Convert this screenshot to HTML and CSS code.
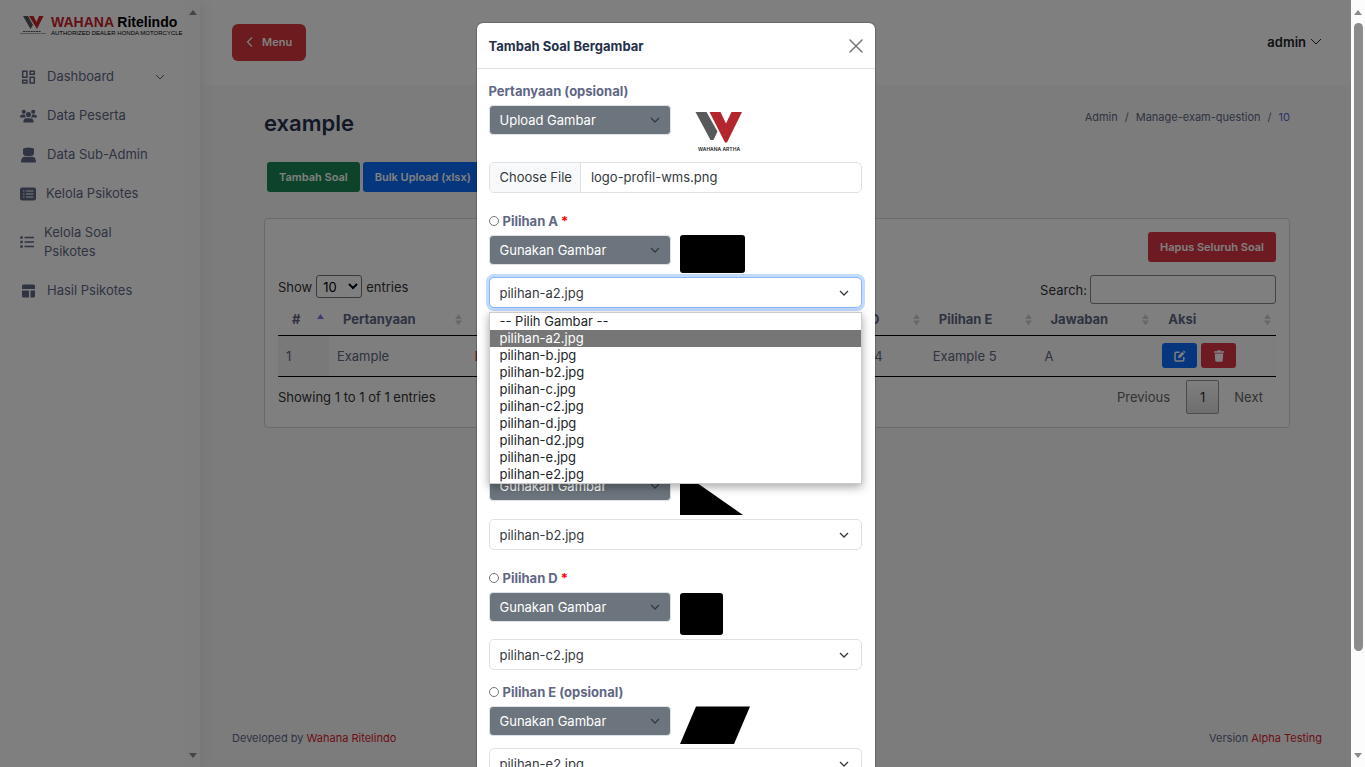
FILE: index.html
```html
<!DOCTYPE html>
<html lang="id">
<head>
<meta charset="utf-8">
<meta name="viewport" content="width=device-width, initial-scale=1">
<title>Manage exam question</title>
<link rel="stylesheet" href="styles.css">
</head>
<body>
<div class="window">
  <div class="app">
    <aside class="sidebar">
      <div class="sidebar-content">
        <a class="brand" href="#" aria-label="Wahana Ritelindo">
          <svg class="brand-mark" viewBox="0 0 26 22" width="26" height="22" aria-hidden="true">
            <path d="M3 2h5l5 9-2.500 4z" fill="#55575a"/>
            <path d="M9 2h4.500l3 6 2.500-6h4.500l-6.500 13z" fill="#c8202a"/>
            <path d="M3 17.500h18" stroke="#555" stroke-width="1" stroke-dasharray="2 .6"/>
            <path d="M0 19.500h26" stroke="#777" stroke-width=".8" stroke-dasharray="1.600 .5"/>
          </svg>
          <span class="brand-text">
            <span class="brand-name"><span class="brand-red">WAHANA</span> Ritelindo</span>
            <span class="brand-sub">AUTHORIZED DEALER HONDA MOTORCYCLE</span>
          </span>
        </a>
        <nav class="menu">
          <a class="menu-item" href="#">
            <svg class="icon" viewBox="0 0 16 16" width="17" height="16" fill="none" stroke="currentColor" stroke-width="1.500"><path d="M2.200 2.200h4.200v6H2.200zM9.600 2.200h4.200v3H9.600zM9.600 8.200h4.200v5.800H9.600zM2.200 11.200h4.200V14H2.200z"/></svg>
            <span class="menu-text">Dashboard</span>
            <svg class="chevron" viewBox="0 0 10 10" width="10" height="10" fill="none" stroke="currentColor"><path d="M1 3l4 4 4-4"/></svg>
          </a>
          <a class="menu-item" href="#">
            <svg class="icon" viewBox="0 0 18 16" width="17" height="16" fill="currentColor"><circle cx="4" cy="3.500" r="2.200"/><circle cx="14" cy="3.500" r="2.200"/><circle cx="9" cy="6.500" r="2.700"/><path d="M0 9.500Q0 6.500 3 6.500h2.300Q5.200 8.500 6.500 9.500zM18 9.500Q18 6.500 15 6.500h-2.300q.1 2-1.200 3zM3.500 15q0-4.700 3.500-4.700h4q3.500 0 3.500 4.700z"/></svg>
            <span class="menu-text">Data Peserta</span>
          </a>
          <a class="menu-item" href="#">
            <svg class="icon" viewBox="0 0 16 16" width="17" height="16" fill="currentColor"><path d="M2.500 3Q2.500.5 4.700 1 8 .2 11.300 1q2.200-.5 2.200 2v3q0 3-3.500 3H6Q2.500 9 2.500 6zM.5 15.500Q.5 10 4 9.700h8q3.500.3 3.500 5.800z"/></svg>
            <span class="menu-text">Data Sub-Admin</span>
          </a>
          <a class="menu-item" href="#">
            <svg class="icon" viewBox="0 0 16 14" width="16" height="14"><rect y=".5" width="16" height="13" rx="2" fill="currentColor"/><path d="M3 4h1.500M6 4h7.500M3 7h1.500M6 7h7.500M3 10h1.500M6 10h7.500" stroke="#fff" stroke-width="1.200"/></svg>
            <span class="menu-text">Kelola Psikotes</span>
          </a>
          <a class="menu-item" href="#">
            <svg class="icon" viewBox="0 0 14 14" width="14" height="14" fill="none" stroke="currentColor"><path d="M4.500 2.500H14M4.500 7H14M4.500 11.500H14" stroke-width="1.500"/><path d="M.3 2.500h2.400M.3 7h2.400M.3 11.500h2.400" stroke-width="2.400"/></svg>
            <span class="menu-text">Kelola Soal Psikotes</span>
          </a>
          <a class="menu-item" href="#">
            <svg class="icon" viewBox="0 0 16 16" width="17" height="16" fill="currentColor"><path d="M1.500 3q0-1.500 1.500-1.500h10q1.500 0 1.500 1.500v3h-13zM1.500 7.500h7V14.500H3q-1.500 0-1.500-1.500zM10 7.500h4.500V13q0 1.500-1.500 1.500h-3z"/></svg>
            <span class="menu-text">Hasil Psikotes</span>
          </a>
        </nav>
      </div>
      <div class="scrollbar scrollbar-side" aria-hidden="true"><i class="arrow-up"></i><i class="arrow-down"></i></div>
    </aside>

    <div class="page">
      <header class="topbar">
        <button class="btn btn-menu" type="button">
          <svg viewBox="0 0 8 12" width="8" height="12" fill="none" stroke="currentColor" stroke-width="1.200"><path d="M6 1.500L1.500 6 6 10.500"/></svg>
          Menu
        </button>
        <a class="user" href="#">admin
          <svg viewBox="0 0 12 10" width="12" height="10" fill="none" stroke="currentColor"><path d="M1 2l5 5 5-5"/></svg>
        </a>
      </header>

      <main class="main">
        <div class="heading">
          <h1 class="title">example</h1>
          <nav class="crumbs"><a href="#">Admin</a><span>/</span><a href="#">Manage-exam-question</a><span>/</span><a class="crumb-active" href="#">10</a></nav>
        </div>
        <div class="actions">
          <button class="btn btn-green" type="button">Tambah Soal</button>
          <button class="btn btn-blue" type="button">Bulk Upload (xlsx)</button>
        </div>
        <section class="card">
          <div class="card-top"><button class="btn btn-red" type="button">Hapus Seluruh Soal</button></div>
          <div class="filters">
            <label class="length">Show <select class="length-select"><option>10</option></select> entries</label>
            <label class="search">Search:<input class="search-input" type="search"></label>
          </div>
          <table class="table">
            <colgroup><col class="c-no"><col class="c-question"><col><col><col><col><col class="c-e"><col class="c-answer"><col class="c-action"></colgroup>
            <thead>
              <tr>
                <th class="sorted">#</th><th>Pertanyaan</th><th>Pilihan A</th><th>Pilihan B</th><th>Pilihan C</th><th>Pilihan D</th><th>Pilihan E</th><th>Jawaban</th><th>Aksi</th>
              </tr>
            </thead>
            <tbody>
              <tr>
                <td class="no">1</td><td>Example</td><td class="correct">Example 1</td><td>Example 2</td><td>Example 3</td><td>Example 4</td><td>Example 5</td><td>A</td>
                <td>
                  <div class="row-actions">
                    <button class="btn-icon btn-blue" type="button" aria-label="Edit"><svg viewBox="0 0 12 12" width="12" height="12" fill="none" stroke="currentColor" stroke-width="1.500"><path d="M5.500 2.200H2.200Q1 2.200 1 3.400v6.400Q1 11 2.200 11h6.400q1.200 0 1.200-1.200V7"/><path d="M4 8l.4-2.200 4-4 1.900 1.900-4 4zM9 1.200l.8-.8 1.900 1.900-.8.8z" fill="currentColor" stroke="none"/></svg></button>
                    <button class="btn-icon btn-red" type="button" aria-label="Hapus"><svg viewBox="0 0 12 12" width="12" height="12" fill="currentColor"><path d="M1 1.200h3L4.600.2h2.800l.6 1h3v1.500H1zM1.800 3.500h8.400l-.5 7.300q-.1 1-1.100 1H3.400q-1 0-1.100-1z"/></svg></button>
                  </div>
                </td>
              </tr>
            </tbody>
          </table>
          <div class="table-foot">
            <div class="info">Showing 1 to 1 of 1 entries</div>
            <div class="pager"><button class="page-btn" type="button">Previous</button><button class="page-btn current" type="button">1</button><button class="page-btn" type="button">Next</button></div>
          </div>
        </section>
      </main>

      <footer class="footer">
        <div>Developed by <a href="#">Wahana Ritelindo</a></div>
        <div>Version <a href="#">Alpha Testing</a></div>
      </footer>
    </div>

    <div class="backdrop">
      <div class="modal" role="dialog" aria-labelledby="modal-title">
        <div class="modal-header">
          <h2 class="modal-title" id="modal-title">Tambah Soal Bergambar</h2>
          <button class="close" type="button" aria-label="Close"><svg viewBox="0 0 14 14" width="14" height="14" fill="none" stroke="currentColor" stroke-width="1.500" stroke-linecap="round"><path d="M1 1l12 12M13 1L1 13"/></svg></button>
        </div>
        <form class="modal-body">
          <div class="field">
            <label class="field-label" for="q-type">Pertanyaan (opsional)</label>
            <div class="type-row">
              <select class="select type" id="q-type"><option>Upload Gambar</option></select>
              <svg class="preview" viewBox="0 0 78 53" width="78" height="53" role="img" aria-label="Wahana Artha">
                <path d="M15.500 7h11l11 19.500-4 8.500h-3z" fill="#58595b"/>
                <path d="M29.500 7h11l5.500 11.500L51.500 7H62L47 37.500h-2z" fill="#b3262e"/>
                <text x="39" y="46" class="logo-caption">WAHANA ARTHA</text>
              </svg>
            </div>
            <label class="file"><input class="file-input" type="file"><span class="file-button">Choose File</span><span class="file-name">logo-profil-wms.png</span></label>
          </div>

          <div class="field">
            <div class="option-label"><input class="radio" type="radio" name="answer" id="a"><label for="a">Pilihan A <span class="required">*</span></label></div>
            <div class="type-row">
              <select class="select type" aria-label="Jenis pilihan A"><option>Gunakan Gambar</option></select>
              <svg class="preview" viewBox="0 0 65 38" width="65" height="38"><rect width="65" height="38" rx="3"/></svg>
            </div>
            <div class="picker">
              <select class="select wide focused" aria-label="Gambar pilihan A"><option>pilihan-a2.jpg</option></select>
              <ul class="options" role="listbox" aria-label="Pilih gambar">
                <li role="option">-- Pilih Gambar --</li>
                <li role="option" class="chosen" aria-selected="true">pilihan-a2.jpg</li>
                <li role="option">pilihan-b.jpg</li>
                <li role="option">pilihan-b2.jpg</li>
                <li role="option">pilihan-c.jpg</li>
                <li role="option">pilihan-c2.jpg</li>
                <li role="option">pilihan-d.jpg</li>
                <li role="option">pilihan-d2.jpg</li>
                <li role="option">pilihan-e.jpg</li>
                <li role="option">pilihan-e2.jpg</li>
              </ul>
            </div>
          </div>

          <div class="field">
            <div class="option-label"><input class="radio" type="radio" name="answer" id="b"><label for="b">Pilihan B <span class="required">*</span></label></div>
            <div class="type-row">
              <select class="select type" aria-label="Jenis pilihan B"><option>Gunakan Gambar</option></select>
              <svg class="preview" viewBox="0 0 44 44" width="44" height="44"><circle cx="22" cy="22" r="21"/></svg>
            </div>
            <select class="select wide" aria-label="Gambar pilihan B"><option>pilihan-a.jpg</option></select>
          </div>

          <div class="field">
            <div class="option-label"><input class="radio" type="radio" name="answer" id="c"><label for="c">Pilihan C <span class="required">*</span></label></div>
            <div class="type-row">
              <select class="select type" aria-label="Jenis pilihan C"><option>Gunakan Gambar</option></select>
              <svg class="preview" viewBox="0 0 64 44" width="64" height="44"><path d="M0 0L63 44H0z"/></svg>
            </div>
            <select class="select wide" aria-label="Gambar pilihan C"><option>pilihan-b2.jpg</option></select>
          </div>

          <div class="field field-close">
            <div class="option-label"><input class="radio" type="radio" name="answer" id="d"><label for="d">Pilihan D <span class="required">*</span></label></div>
            <div class="type-row">
              <select class="select type" aria-label="Jenis pilihan D"><option>Gunakan Gambar</option></select>
              <svg class="preview" viewBox="0 0 43 43" width="43" height="43"><rect y="1" width="43" height="42" rx="3"/></svg>
            </div>
            <select class="select wide" aria-label="Gambar pilihan D"><option>pilihan-c2.jpg</option></select>
          </div>

          <div class="field">
            <div class="option-label"><input class="radio" type="radio" name="answer" id="e"><label for="e">Pilihan E (opsional)</label></div>
            <div class="type-row">
              <select class="select type" aria-label="Jenis pilihan E"><option>Gunakan Gambar</option></select>
              <svg class="preview" viewBox="0 0 70 38" width="70" height="38"><path d="M16 .5h54L54 38H0z"/></svg>
            </div>
            <select class="select wide" aria-label="Gambar pilihan E"><option>pilihan-e2.jpg</option></select>
          </div>
        </form>
      </div>
    </div>
  </div>
  <div class="scrollbar scrollbar-main" aria-hidden="true"><i class="arrow-up"></i><div class="track"><div class="thumb"></div></div><i class="arrow-down"></i></div>
</div>
</body>
</html>
```
FILE: styles.css
```css
* { box-sizing: border-box; }
body {
  margin: 0;
  font: 13px/20px Inter, "Liberation Sans", sans-serif;
  color: #5f6785;
  background: #fff;
}
a { color: inherit; text-decoration: none; }
button, select, input { font: inherit; color: inherit; margin: 0; }
button { border: 0; padding: 0; cursor: pointer; }
svg { flex: none; display: block; }

.window { display: flex; height: 100vh; overflow: hidden; }
.app { position: relative; flex: 1; display: flex; min-width: 0; overflow: hidden; }

/* Scrollbars */
.scrollbar { flex: none; display: flex; flex-direction: column; justify-content: space-between; align-items: center; width: 14px; padding: 10px 0 9px; }
.scrollbar-side { background: #fcfcfc; }
.scrollbar-main { background: #fcfcfc; }
.arrow-up, .arrow-down { border: 4px solid transparent; }
.arrow-up { border-top: 0; border-bottom: 5px solid #8b8b8b; }
.arrow-down { border-bottom: 0; border-top: 5px solid #8b8b8b; }
.track { flex: 1; padding: 8px 0; }
.thumb { width: 9px; height: 87%; border-radius: 5px; background: #8b8b8b; }

/* Sidebar */
.sidebar { flex: none; display: flex; width: 200px; background: #fff; box-shadow: 0 0 18px #dfe8e8; z-index: 1; }
.sidebar-content { flex: 1; min-width: 0; padding-left: 20px; }
.brand { display: flex; gap: 5px; width: 162px; margin-top: 14px; color: #000; }
.brand-text { display: flex; flex-direction: column; font-family: "Liberation Sans", sans-serif; white-space: nowrap; }
.brand-name { font-size: 14px; line-height: 16px; font-weight: 700; }
.brand-red { color: #c8202a; }
.brand-sub { font-size: 6px; line-height: 6px; }
.menu { display: flex; flex-direction: column; gap: 20px; padding: 31px 21px 0 0; }
.menu-item { display: flex; align-items: center; gap: 10px; line-height: 19px; }
.menu-text { flex: 1; }

/* Page */
.page { flex: 1; display: flex; flex-direction: column; min-width: 0; background: #f9f9f9; }
.topbar { display: flex; justify-content: space-between; align-items: center; height: 85px; padding: 0 29px 1px 32px; background: #fff; }
.btn { height: 30px; padding: 0 12px; border-radius: 3px; color: #fff; font-size: 11px; font-weight: 600; white-space: nowrap; }
.btn-menu { display: flex; align-items: center; gap: 8px; height: 37px; padding: 0 14px; border-radius: 6px; background: #d9363e; }
.btn-green { background: #198754; }
.btn-blue { background: #0d6efd; }
.btn-red { background: #dc3545; }
.user { display: flex; align-items: center; gap: 4px; color: #212529; font-weight: 600; }
.main { flex: 1; padding: 20px 61px 0 64px; }
.heading { display: flex; justify-content: space-between; align-items: flex-start; }
.title { margin: 4px 0 0; font-size: 22px; line-height: 28px; font-weight: 600; color: #25304c; }
.crumbs { display: flex; gap: 7px; padding-top: 2px; font-size: 11px; }
.crumb-active { color: #5a62d6; }
.actions { display: flex; gap: 3px; margin: 25px 3px 26px; }
.card { padding: 13px; border: 1px solid #d4d4d4; border-radius: 4px; background: #fff; }
.card-top { display: flex; justify-content: flex-end; margin-bottom: 13px; }
.filters { display: flex; justify-content: space-between; align-items: flex-start; color: #333; }
.length { display: flex; align-items: center; gap: 4px; }
.length-select { width: 46px; height: 23px; padding: 0 2px; border: 1px solid #777; border-radius: 3px; background: #fff; color: #000; }
.search { display: flex; align-items: center; gap: 3px; }
.search-input { width: 186px; height: 29px; border: 1px solid #888; border-radius: 3px; background: #fff; }
.table { width: 100%; table-layout: fixed; border-collapse: collapse; border-bottom: 1px solid #000; }
.c-no { width: 5.1%; }
.c-question { width: 13.8%; }
.c-e { width: 11.2%; }
.c-answer { width: 11.8%; }
.c-action { width: 12.2%; }
.table th {
  height: 31px; padding: 0 14px; border-bottom: 1px solid #000; text-align: left; font-weight: 700;
  background: url("data:image/svg+xml,%3Csvg xmlns='http://www.w3.org/2000/svg' viewBox='0 0 7 11'%3E%3Cpath d='M0 5l3.500-5L7 5zM0 6.500h7L3.500 11.500z' fill='%23d0d0d0'/%3E%3C/svg%3E") no-repeat right 5px center / 7px 11px;
}
.table th.sorted { background-image: url("data:image/svg+xml,%3Csvg xmlns='http://www.w3.org/2000/svg' viewBox='0 0 7 11'%3E%3Cpath d='M0 5l3.500-5L7 5z' fill='%237a7adf'/%3E%3C/svg%3E"); }
.table td { height: 41px; padding: 0 8px; background: #fcfcfc; }
.table td.no { background: #f2f2f2; }
.table td.correct { color: #d0202a; }
.row-actions { display: flex; gap: 4px; }
.btn-icon { display: flex; align-items: center; justify-content: center; width: 35px; height: 25px; border-radius: 3px; color: #fff; }
.table-foot { display: flex; justify-content: space-between; padding-top: 3px; color: #333; }
.info { padding-top: 7px; }
.pager { display: flex; color: #666; }
.page-btn { height: 34px; padding: 0 13px; background: none; }
.page-btn:first-child { margin-right: 3px; }
.page-btn:last-child { margin-left: 2px; }
.page-btn.current { border: 1px solid #979797; border-radius: 2px; background: linear-gradient(#fff, #dcdcdc); color: #333; }
.footer { display: flex; justify-content: space-between; padding: 0 29px 19px 32px; font-size: 11px; }
.footer a { color: #d9202c; }

/* Modal */
.backdrop { position: absolute; inset: 0; z-index: 2; display: flex; justify-content: center; align-items: flex-start; padding-top: 22px; background: rgba(0, 0, 0, .5); overflow: hidden; }
.modal { width: 400px; border: 1px solid rgba(0, 0, 0, .18); border-radius: 7px; background: #fff; background-clip: padding-box; }
.modal-header { display: flex; justify-content: space-between; align-items: center; height: 46px; padding: 0 12px; border-bottom: 1px solid #dee2e6; }
.modal-title { margin: 0; font-size: 13px; line-height: 20px; font-weight: 700; color: #25304c; }
.close { background: none; color: #777; }
.modal-body { display: flex; flex-direction: column; gap: 18px; padding: 12px 13px 12px 12px; }
.field { display: flex; flex-direction: column; gap: 4px; }
.field-close { margin-bottom: -6px; }
.field-label, .option-label { font-weight: 700; }
.option-label { display: flex; align-items: center; gap: 4px; }
.radio { width: 10px; height: 10px; }
.required { color: #f00; }
.type-row { display: flex; align-items: flex-start; gap: 9px; }
.select {
  appearance: none; height: 31px; padding: 0 28px 0 10px; border: 1px solid #dee2e6; border-radius: 5px; color: #343a40;
  background: #fff url("data:image/svg+xml,%3Csvg xmlns='http://www.w3.org/2000/svg' viewBox='0 0 10 10'%3E%3Cpath d='M1 3l4 4 4-4' fill='none' stroke='%23343a40' stroke-width='1.300'/%3E%3C/svg%3E") no-repeat right 12px center / 10px 10px;
}
.select.type { width: 182px; height: 30px; border-radius: 4px; background-color: #6c757d; background-position: right 10px center; color: #fff; }
.wide { width: 100%; }
.focused { border-color: #86b7fe; box-shadow: 0 0 0 3px #c2dbfe; }
.logo-caption { font: 600 5px Inter, sans-serif; fill: #222; text-anchor: middle; }
.file { position: relative; display: flex; height: 31px; border: 1px solid #dee2e6; border-radius: 5px; line-height: 29px; color: #343a40; overflow: hidden; }
.file-input { position: absolute; inset: 0; opacity: 0; }
.file-button { padding: 0 8px 0 10px; border-right: 1px solid #dee2e6; background: #f8f9fa; }
.file-name { padding-left: 10px; }
.picker { position: relative; }
.picker .select { display: block; }
.options {
  position: absolute; top: 35px; left: 0; right: 0; z-index: 3; margin: 0; padding: 0; list-style: none;
  border: 1px solid #ccc; background: #fff; color: #212529; line-height: 17px; box-shadow: 0 3px 9px rgba(0, 0, 0, .35);
}
.options li { padding-left: 10px; }
.options .chosen { background: #767676; color: #fff; }
```
